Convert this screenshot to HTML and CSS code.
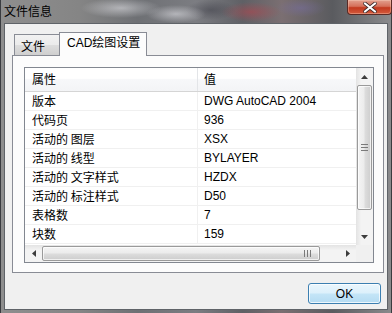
FILE: index.html
```html
<!DOCTYPE html>
<html lang="zh">
<head>
<meta charset="utf-8">
<title>文件信息</title>
<link rel="stylesheet" href="styles.css">
</head>
<body>
<div class="window">
  <div class="titlebar">
    <span class="title">文件信息</span>
    <div class="close">
      <svg width="16" height="11" viewBox="0 0 16 11"><path d="M3 1.5 L13 9.5 M13 1.5 L3 9.5" stroke="#3a2a2a" stroke-width="3.6" stroke-linecap="round"/><path d="M3 1.5 L13 9.5 M13 1.5 L3 9.5" stroke="#ffffff" stroke-width="2.2" stroke-linecap="round"/></svg>
    </div>
  </div>
  <div class="client">
    <div class="tabs">
      <div class="tab">文件</div>
      <div class="tab active">CAD绘图设置</div>
    </div>
    <div class="panel">
      <div class="list">
        <div class="view">
          <div class="row head"><div class="c1">属性</div><div class="c2">值</div></div>
          <div class="row"><div class="c1">版本</div><div class="c2">DWG AutoCAD 2004</div></div>
          <div class="row"><div class="c1">代码页</div><div class="c2">936</div></div>
          <div class="row"><div class="c1">活动的 图层</div><div class="c2">XSX</div></div>
          <div class="row"><div class="c1">活动的 线型</div><div class="c2">BYLAYER</div></div>
          <div class="row"><div class="c1">活动的 文字样式</div><div class="c2">HZDX</div></div>
          <div class="row"><div class="c1">活动的 标注样式</div><div class="c2">D50</div></div>
          <div class="row"><div class="c1">表格数</div><div class="c2">7</div></div>
          <div class="row"><div class="c1">块数</div><div class="c2">159</div></div>
        </div>
        <div class="vscroll">
          <div class="arrow"><svg width="7" height="4" viewBox="0 0 7 4"><path d="M0 4 L3.5 0 L7 4 Z" fill="#3c3c3c"/></svg></div>
          <div class="vthumb"><span class="grip-h"></span></div>
          <div class="vtrack"></div>
          <div class="arrow"><svg width="7" height="4" viewBox="0 0 7 4"><path d="M0 0 L3.5 4 L7 0 Z" fill="#3c3c3c"/></svg></div>
        </div>
        <div class="hscroll">
          <div class="arrow"><svg width="4" height="7" viewBox="0 0 4 7"><path d="M4 0 L0 3.5 L4 7 Z" fill="#3c3c3c"/></svg></div>
          <div class="hthumb"><span class="grip-v"></span></div>
          <div class="htrack"></div>
          <div class="arrow"><svg width="4" height="7" viewBox="0 0 4 7"><path d="M0 0 L4 3.5 L0 7 Z" fill="#3c3c3c"/></svg></div>
        </div>
        <div class="corner"></div>
      </div>
    </div>
    <div class="buttons">
      <button class="ok">OK</button>
    </div>
  </div>
</div>
</body>
</html>
```

FILE: styles.css
```css
html, body {
  margin: 0;
  padding: 0;
  width: 392px;
  height: 313px;
  overflow: hidden;
}

body {
  font-family: "Liberation Sans", "Noto Sans CJK SC", sans-serif;
  font-size: 12px;
  color: #000;
}

.window {
  width: 392px;
  height: 313px;
  box-sizing: border-box;
  display: grid;
  grid-template-rows: 23px 1fr;
  background:
    radial-gradient(ellipse 40px 10px at 120px 8px, rgba(230,230,235,0.55), transparent),
    radial-gradient(ellipse 30px 9px at 175px 14px, rgba(240,240,245,0.5), transparent),
    radial-gradient(ellipse 30px 10px at 250px 12px, rgba(200,60,70,0.45), transparent),
    radial-gradient(ellipse 25px 9px at 300px 8px, rgba(120,110,170,0.45), transparent),
    radial-gradient(ellipse 25px 10px at 210px 10px, rgba(60,60,70,0.5), transparent),
    linear-gradient(90deg, #8e8e8e 0%, #858585 20%, #6e7074 35%, #7c7d82 50%, #5f6065 62%, #7b6f72 72%, #5a5b5f 85%, #8a8a8c 100%);
  padding: 0 5px 3px 3px;
  border-left: 1px solid #3a3c40;
  border-right: 1px solid #3a3c40;
}

.titlebar {
  position: relative;
  display: flex;
  align-items: center;
  margin: 0 -5px 0 -3px;
  padding-left: 3px;
}

.title {
  font-family: "Noto Sans CJK SC", sans-serif;
  font-size: 12px;
  color: #000;
  line-height: 14px;
  margin-top: -2px;
}

.close {
  position: absolute;
  top: 0;
  right: 1px;
  width: 45px;
  height: 15px;
  box-sizing: border-box;
  border: 1px solid #5a2a25;
  border-top: none;
  border-radius: 0 0 4px 4px;
  background: linear-gradient(#e2a08f 0%, #d5705a 45%, #c2391f 55%, #d45a3c 100%);
  box-shadow: inset 0 0 0 1px rgba(255,220,200,0.35);
  display: flex;
  align-items: center;
  justify-content: center;
}

.client {
  background: #f0f0f0;
  border: 1px solid #5f6368;
  padding: 8px 3px 0 7px;
  box-sizing: border-box;
  display: flex;
  flex-direction: column;
  min-height: 0;
}

.tabs {
  height: 23px;
  display: flex;
  align-items: flex-end;
  padding-left: 2px;
}

.tab {
  box-sizing: border-box;
  height: 21px;
  width: 47px;
  border: 1px solid #898c95;
  border-bottom: none;
  background: linear-gradient(#f2f2f2 0%, #ebebeb 50%, #dddddd 51%, #cfcfcf 100%);
  font-family: "Noto Sans CJK SC", sans-serif;
  padding: 3px 0 0 6px;
  line-height: 16px;
}

.tab.active {
  position: relative;
  z-index: 1;
  height: 24px;
  width: 88px;
  margin-left: -2px;
  margin-bottom: -1px;
  background: #fcfcfc;
  padding: 2px 0 0 7px;
  font-family: "Liberation Sans", "Noto Sans CJK SC", sans-serif;
}

.panel {
  box-sizing: border-box;
  width: 372px;
  height: 218px;
  border: 1px solid #898c95;
  background: #fcfcfc;
  padding: 11px;
}

.list {
  box-sizing: border-box;
  width: 350px;
  height: 196px;
  border: 1px solid #828790;
  background: #fff;
  display: grid;
  grid-template-columns: 1fr 17px;
  grid-template-rows: 1fr 17px;
  overflow: hidden;
}

.view {
  overflow: hidden;
  min-width: 0;
}

.row {
  display: grid;
  grid-template-columns: 173px 1fr;
  height: 19px;
  box-sizing: border-box;
  border-bottom: 1px solid #f0f0f0;
  line-height: 18px;
  white-space: nowrap;
}

.row .c1 {
  padding-left: 7px;
  border-right: 1px solid #f0f0f0;
  font-family: "Noto Sans CJK SC", sans-serif;
}

.row .c2 {
  padding-left: 6px;
}

.row.head {
  height: 24px;
  line-height: 22px;
  background: linear-gradient(#ffffff 0%, #ffffff 45%, #f7f8fa 50%, #f3f4f6 100%);
  border-bottom: 1px solid #d5d5d5;
}

.row.head .c1 {
  border-right: 1px solid #e3e5e8;
}

.row.head .c2 {
  font-family: "Noto Sans CJK SC", sans-serif;
}

.vscroll {
  display: grid;
  grid-template-rows: 17px 125px 1fr 17px;
  background: linear-gradient(90deg, #e3e3e3 0%, #f3f3f3 30%, #f3f3f3 100%);
}

.hscroll {
  display: grid;
  grid-template-columns: 17px 278px 1fr 17px;
  background: linear-gradient(#e3e3e3 0%, #f3f3f3 30%, #f3f3f3 100%);
}

.arrow {
  display: flex;
  align-items: center;
  justify-content: center;
}

.vthumb {
  margin: 0 1px;
  border: 1px solid #9a9a9a;
  border-radius: 2px;
  background: linear-gradient(90deg, #f4f4f4 0%, #ececec 45%, #dcdcdc 55%, #cdcdcd 100%);
  box-shadow: inset 0 0 0 1px rgba(255,255,255,0.7);
  display: flex;
  align-items: center;
  justify-content: center;
}

.hthumb {
  margin: 1px 0;
  border: 1px solid #9a9a9a;
  border-radius: 2px;
  background: linear-gradient(#f4f4f4 0%, #ececec 45%, #dcdcdc 55%, #cdcdcd 100%);
  box-shadow: inset 0 0 0 1px rgba(255,255,255,0.7);
  display: flex;
  align-items: center;
  justify-content: flex-end;
  padding-right: 8px;
}

.grip-h {
  width: 7px;
  height: 5px;
  border-top: 1px solid #7a7a7a;
  border-bottom: 1px solid #7a7a7a;
  background: linear-gradient(transparent 0, transparent 2px, #7a7a7a 2px, #7a7a7a 3px, transparent 3px);
}

.grip-v {
  width: 5px;
  height: 7px;
  border-left: 1px solid #7a7a7a;
  border-right: 1px solid #7a7a7a;
  background: linear-gradient(90deg, transparent 0, transparent 2px, #7a7a7a 2px, #7a7a7a 3px, transparent 3px);
}

.corner {
  background: #f0f0f0;
}

.buttons {
  display: flex;
  justify-content: flex-end;
  margin-top: 10px;
  padding-right: 3px;
}

.ok {
  box-sizing: border-box;
  width: 73px;
  height: 21px;
  margin: 0;
  padding: 0;
  border: 1px solid #3c7fb1;
  border-radius: 3px;
  background: linear-gradient(#eaf6fd 0%, #dcf0fb 48%, #c4e5f7 52%, #b4dbf2 100%);
  box-shadow: inset 0 0 0 1px rgba(255,255,255,0.75);
  font-family: "Liberation Sans", sans-serif;
  font-size: 12px;
  color: #000;
}
```
